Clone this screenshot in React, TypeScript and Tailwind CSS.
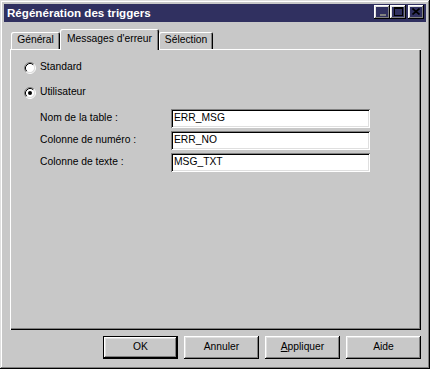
import React from "react";

const raised =
  "shadow-[inset_-1px_-1px_#000,inset_1px_1px_#fff,inset_-2px_-2px_#808080,inset_2px_2px_#dfdfdf]";

function Radio({ checked }: { checked?: boolean }) {
  return (
    <svg width="12" height="12" viewBox="0 0 12 12" className="shrink-0">
      <circle cx="6" cy="6" r="4.5" fill="#fff" />
      <path d="M2.11 9.89 A5.5 5.5 0 0 1 9.89 2.11" stroke="#808080" strokeWidth="1" fill="none" />
      <path d="M9.89 2.11 A5.5 5.5 0 0 1 2.11 9.89" stroke="#fff" strokeWidth="1" fill="none" />
      <path d="M2.82 9.18 A4.5 4.5 0 0 1 9.18 2.82" stroke="#000" strokeWidth="1" fill="none" />
      <path d="M9.18 2.82 A4.5 4.5 0 0 1 2.82 9.18" stroke="#dfdfdf" strokeWidth="1" fill="none" />
      {checked && <circle cx="6" cy="6" r="2" fill="#000" />}
    </svg>
  );
}

function Field({ label, value }: { label: string; value: string }) {
  return (
    <div className="flex items-center h-[19px]">
      <div className="w-[131px] ml-[16px]">{label}</div>
      <div className="w-[199px] h-[19px] bg-white flex items-center pl-[3px] shadow-[inset_1px_1px_#808080,inset_-1px_-1px_#fff,inset_2px_2px_#000,inset_-2px_-2px_#dfdfdf]">
        {value}
      </div>
    </div>
  );
}

function Btn({ children, def }: { children: React.ReactNode; def?: boolean }) {
  if (def) {
    return (
      <div className="w-[75px] h-[23px] border border-black">
        <div className={`w-full h-full flex items-center justify-center ${raised}`}>{children}</div>
      </div>
    );
  }
  return (
    <div className={`w-[75px] h-[23px] flex items-center justify-center ${raised}`}>{children}</div>
  );
}

export default function App() {
  return (
    <div
      className="w-[430px] h-[369px] bg-[#c8c8c8] pt-[4px] pl-[4px] text-black text-[10.3px] leading-none shadow-[inset_-1px_-1px_#000,inset_1px_1px_#dfdfdf,inset_-2px_-2px_#808080,inset_2px_2px_#fff]"
      style={{ fontFamily: '"Liberation Sans", Arial, sans-serif' }}
    >
      {/* Title bar */}
      <div className="w-[422px] h-[18px] bg-[#303060] flex items-center pl-[3px] pr-[2px]">
        <span className="text-white font-bold text-[11.6px]">Régénération des triggers</span>
        <div className="ml-auto flex items-center mb-[2px]">
          <div className={`w-[16px] h-[14px] flex items-end justify-center pb-[3px] pl-[1px] ${raised}`}>
            <div className="w-[6px] h-[2px] bg-[#808080]" />
          </div>
          <div className={`w-[16px] h-[14px] flex items-center justify-center ${raised}`}>
            <div className="w-[9px] h-[9px] border border-black border-t-2 mb-[1px]" />
          </div>
          <div className={`ml-[2px] w-[16px] h-[14px] flex items-center justify-center ${raised}`}>
            <svg width="8" height="7" viewBox="0 0 8 7" className="mb-[1px]">
              <path d="M0.5 0.5 L7.5 6.5 M7.5 0.5 L0.5 6.5" stroke="#000" strokeWidth="1.6" fill="none" />
            </svg>
          </div>
        </div>
      </div>

      {/* Tabs */}
      <div className="ml-[6px] mt-[7px] h-[20px] flex items-end">
        <div className="ml-[1px] w-[49px] h-[17px] flex items-center justify-center rounded-t-[2px] shadow-[inset_1px_1px_#fff,inset_-1px_0_#000,inset_-2px_0_#808080]">
          Général
        </div>
        <div className="relative z-10 -mb-[1px] w-[99px] h-[21px] bg-[#c8c8c8] flex items-start pt-[5px] justify-center rounded-t-[2px] shadow-[inset_1px_1px_#fff,inset_-1px_0_#000,inset_-2px_0_#808080]">
          Messages d'erreur
        </div>
        <div className="w-[54px] h-[17px] flex items-center justify-center rounded-t-[2px] shadow-[inset_1px_1px_#fff,inset_-1px_0_#000,inset_-2px_0_#808080]">
          Sélection
        </div>
      </div>

      {/* Panel */}
      <div className="ml-[6px] w-[411px] h-[281px] pt-[12px] pl-[14px] shadow-[inset_1px_1px_#fff,inset_-1px_-1px_#000,inset_-2px_-2px_#808080]">
        <div className="flex items-center h-[13px] gap-[4px]">
          <Radio />
          <span>Standard</span>
        </div>
        <div className="flex items-center h-[13px] gap-[4px] mt-[12px]">
          <Radio checked />
          <span>Utilisateur</span>
        </div>
        <div className="mt-[10px] flex flex-col gap-[3px]">
          <Field label="Nom de la table :" value="ERR_MSG" />
          <Field label="Colonne de numéro :" value="ERR_NO" />
          <Field label="Colonne de texte :" value="MSG_TXT" />
        </div>
      </div>

      {/* Buttons */}
      <div className="w-[417px] mt-[6px] flex justify-end gap-[6px]">
        <Btn def>OK</Btn>
        <Btn>Annuler</Btn>
        <Btn>
          <span>
            <span className="underline">A</span>ppliquer
          </span>
        </Btn>
        <Btn>Aide</Btn>
      </div>
    </div>
  );
}
